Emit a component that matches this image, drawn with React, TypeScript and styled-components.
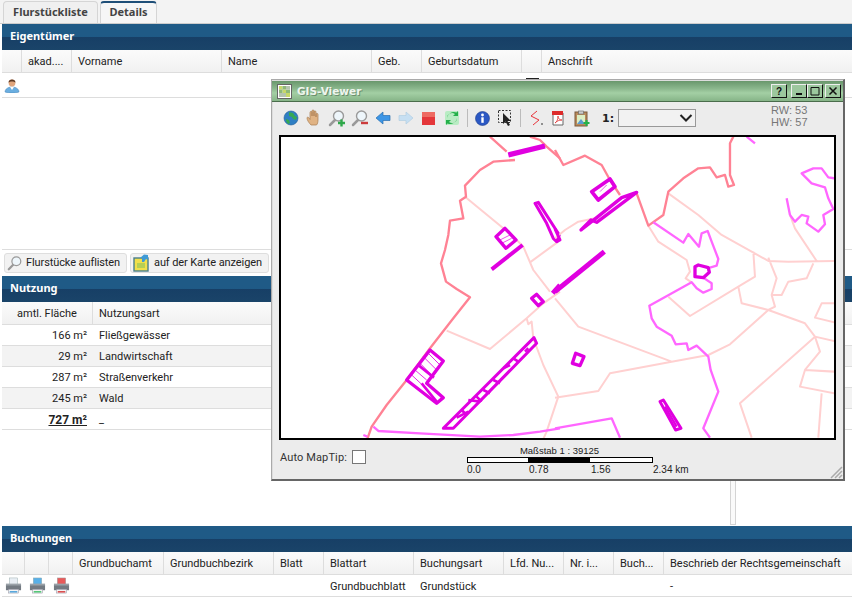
import styled, { createGlobalStyle } from "styled-components";

const Global = createGlobalStyle`
  html, body { margin: 0; padding: 0; background: #fff; }
  body { font-family: Roboto, "Noto Sans", sans-serif; font-size: 11px; color: #222; }
  #root { width: 852px; height: 604px; overflow: hidden; }
`;

const Page = styled.div`
  position: relative;
  width: 852px;
  height: 604px;
  overflow: hidden;
  background: #fff;
  display: flex;
  flex-direction: column;
`;

const TabBar = styled.div`
  display: flex;
  gap: 2px;
  height: 22px;
  padding: 1px 0 0 3px;
  background: #f3f3f3;
  border-bottom: 1px solid #ccc;
  box-sizing: content-box;
`;

const Tab = styled.div<{ $active?: boolean; $width: number }>`
  width: ${(p) => p.$width}px;
  box-sizing: border-box;
  border: 1px solid #d5d5d5;
  border-bottom: none;
  border-top: ${(p) => (p.$active ? "2px solid #1f4f78" : "1px solid #d5d5d5")};
  border-radius: 4px 4px 0 0;
  background: ${(p) => (p.$active ? "#f6f6f6" : "#f0f0f0")};
  font: 700 11px/${(p) => (p.$active ? 18 : 20)}px "Noto Sans", sans-serif;
  color: #444;
  text-align: center;
`;

const Section = styled.section`
  margin-left: 2px;
`;

const SectionTitle = styled.h2`
  margin: 0;
  height: 26px;
  padding-left: 8px;
  box-sizing: border-box;
  font: 700 11px/24px "Noto Sans", sans-serif;
  color: #fff;
  background: linear-gradient(#1f5a86 0%, #1f5a86 48%, #173f66 52%, #1a4469 100%);
`;

const HeadRow = styled.div`
  display: flex;
  height: 23px;
  background: linear-gradient(#fbfbfb, #f1f1f1);
  border-bottom: 1px solid #ddd;
  box-sizing: border-box;
`;

const HeadCell = styled.div<{ $w?: number; $center?: boolean }>`
  width: ${(p) => (p.$w ? `${p.$w}px` : "auto")};
  flex: ${(p) => (p.$w ? "none" : 1)};
  box-sizing: border-box;
  padding: 1px 6px 0;
  line-height: 22px;
  text-align: ${(p) => (p.$center ? "center" : "left")};
  white-space: nowrap;
  overflow: hidden;
  border-right: ${(p) => (p.$w ? "1px solid #ddd" : "none")};
`;

const Row = styled.div<{ $alt?: boolean; $h?: number }>`
  display: flex;
  align-items: center;
  height: ${(p) => p.$h || 21}px;
  box-sizing: border-box;
  background: ${(p) => (p.$alt ? "#f3f3f3" : "#fff")};
  border-bottom: 1px solid #ddd;
`;

const Cell = styled.div<{ $w?: number; $right?: boolean; $strong?: boolean }>`
  width: ${(p) => (p.$w ? `${p.$w}px` : "auto")};
  flex: ${(p) => (p.$w ? "none" : 1)};
  box-sizing: border-box;
  padding: 1px 6px 0;
  white-space: nowrap;
  text-align: ${(p) => (p.$right ? "right" : "left")};
  font-weight: ${(p) => (p.$strong ? 700 : 400)};
  font-size: ${(p) => (p.$strong ? "12px" : "11px")};
  text-decoration: ${(p) => (p.$strong ? "underline" : "none")};
`;

const IconCell = styled.div<{ $w: number }>`
  width: ${(p) => p.$w}px;
  flex: none;
  display: flex;
  justify-content: center;
`;

const EmptyArea = styled.div<{ $h: number }>`
  height: ${(p) => p.$h}px;
`;

const ButtonBar = styled.div`
  display: flex;
  gap: 3px;
  height: 27px;
  padding: 3px 0 0 2px;
  box-sizing: border-box;
  border-top: 1px solid #ddd;
`;

const ToolButton = styled.div<{ $w: number }>`
  width: ${(p) => p.$w}px;
  height: 20px;
  box-sizing: border-box;
  display: flex;
  align-items: center;
  gap: 3px;
  padding: 0 0 1px 2px;
  white-space: nowrap;
  letter-spacing: -0.1px;
  background: #f2f2f2;
  border: 1px solid #dedede;
  border-radius: 3px;
`;

const Strut = styled.div`
  position: absolute;
  left: 730px;
  top: 480px;
  width: 6px;
  height: 45px;
  box-sizing: border-box;
  border: 1px solid #d4d4d4;
  border-top: none;
  background: #fafafa;
`;

const Tick = styled.div`
  position: absolute;
  left: 526px;
  top: 78px;
  width: 13px;
  height: 1px;
  background: #222;
`;

const Window = styled.div`
  position: absolute;
  left: 271px;
  top: 79px;
  width: 574px;
  height: 402px;
  box-sizing: border-box;
  display: flex;
  flex-direction: column;
  background: #ececec;
  border: 1px solid #aaa;
  border-right: 2px solid #666;
  border-bottom: 2px solid #666;
  box-shadow: inset 1px 1px 0 #ddd;
`;

const TitleBar = styled.div`
  height: 20px;
  margin-top: 1px;
  flex: none;
  display: flex;
  align-items: center;
  padding: 0 2px 0 5px;
  background: linear-gradient(#69976c 0%, #8db98f 40%, #a3cfa4 60%, #86b488 100%);
  border-bottom: 1px solid #4a6d4c;
`;

const TitleText = styled.div`
  margin-left: 5px;
  font: 700 10.5px "DejaVu Sans", sans-serif;
  color: #eef5ee;
  text-shadow: 1px 1px 0 #6b8f6d;
  flex: 1;
`;

const TitleBtn = styled.div<{ $gap?: number }>`
  width: 16px;
  height: 14px;
  margin-left: ${(p) => p.$gap || 0}px;
  box-sizing: border-box;
  background: #9cc79e;
  border: 1px solid #111;
  border-top-color: #eee;
  border-left-color: #eee;
  display: flex;
  align-items: center;
  justify-content: center;
  font: 700 10px "Liberation Sans", sans-serif;
  color: #111;
`;

const Toolbar = styled.div`
  height: 33px;
  flex: none;
  display: flex;
  align-items: center;
  padding: 0 0 1px 7px;
  box-sizing: border-box;
`;

const ToolIcon = styled.div`
  width: 23px;
  height: 20px;
  flex: none;
  display: flex;
  align-items: center;
  justify-content: center;
`;

const ToolSep = styled.div<{ $tight?: boolean }>`
  width: 1px;
  height: 18px;
  margin: 0 3px 0 ${(p) => (p.$tight ? 3 : 4)}px;
  background: #bbb;
  flex: none;
`;

const ScaleLabel = styled.b`
  margin: 0 4px 0 9px;
  font: 700 11px "DejaVu Sans", sans-serif;
  color: #222;
`;

const SelectBox = styled.div`
  width: 78px;
  height: 18px;
  box-sizing: border-box;
  border: 1px solid #999;
  background: #f2f2f2;
  display: flex;
  justify-content: flex-end;
  align-items: center;
  padding-right: 2px;
`;

const Coords = styled.div`
  margin-left: 75px;
  font: 11px/12px "Liberation Sans", sans-serif;
  color: #777;
  margin-top: -4px;
`;

const MapFrame = styled.div`
  margin-left: 7px;
  width: 557px;
  height: 305px;
  flex: none;
  box-sizing: border-box;
  border: 2px solid #000;
  background: #fff;
  overflow: hidden;
  svg { display: block; }
`;

const Footer = styled.div`
  flex: 1;
  position: relative;
  display: flex;
  padding-left: 8px;
`;

const TipLabel = styled.div`
  display: flex;
  align-items: center;
  gap: 5px;
  height: 34px;
  width: 87px;
  white-space: nowrap;
  font-size: 11px;
  color: #333;
  letter-spacing: 0.12px;
`;

const TipBox = styled.div`
  width: 14px;
  height: 14px;
  flex: none;
  box-sizing: border-box;
  border: 1px solid #777;
  background: #fff;
`;

const ScaleWrap = styled.div`
  margin-left: 100px;
  padding-top: 5px;
  width: 240px;
  font: 9.5px/11px "Liberation Sans", sans-serif;
  color: #222;
`;

const ScaleTitle = styled.div`
  width: 185px;
  text-align: center;
`;

const ScaleBar = styled.div`
  display: flex;
  width: 186px;
  height: 6px;
  margin-top: 1px;
  box-sizing: border-box;
  border: 1px solid #000;
  background: #fff;
`;

const ScaleFill = styled.div`
  width: 62px;
  margin-left: 60px;
  background: #000;
`;

const ScaleTicks = styled.div`
  display: flex;
  margin-top: 1px;
  span { flex: none; width: 62px; font-size: 10px; white-space: nowrap; }
`;

const Grip = styled.svg`
  position: absolute;
  right: 0;
  bottom: 0;
`;

const Person = () => (
  <svg width="16" height="16" viewBox="0 0 16 16">
    <path d="M1 15c0-3 3-5 7-5s7 2 7 5c-3 1.300-11 1.300-14 0z" fill="#6aaee0" stroke="#4a86b8" strokeWidth=".5" />
    <path d="M6 10l2 3 2-3z" fill="#fff" />
    <circle cx="8" cy="6" r="3.400" fill="#e0a57c" />
    <path d="M4.500 5.500C4.500 1.500 11.500 1.500 11.500 5.500 10 4 6 4 4.500 5.500z" fill="#5c3a26" />
  </svg>
);

const Magnifier = ({ sign, size = 18 }: { sign?: "+" | "-"; size?: number }) => (
  <svg width={size} height={size} viewBox="0 0 18 18">
    <path d="M7.500 10.500L2 16" stroke="#999" strokeWidth="2.500" strokeLinecap="round" />
    <circle cx="10.500" cy="7" r="5" fill="#eef6fb" stroke="#9a9a9a" strokeWidth="1.400" />
    {sign === "+" && <path d="M13.500 10.500v7M10 14h7" stroke="#2fa84a" strokeWidth="2.400" />}
    {sign === "-" && <path d="M10 14h7" stroke="#cc3b3b" strokeWidth="2.400" />}
  </svg>
);

const MapTile = () => (
  <svg width="15" height="15" viewBox="0 0 15 15">
    <rect x=".5" y=".5" width="14" height="14" fill="#fff" stroke="#666" />
    <path d="M2 2h3.500v3.500H2zM5.500 5.500H9V9H5.500zM9 9h4v4H9z" fill="#c7d86a" />
    <path d="M5.500 2H9v3.500H5.500zM2 5.500h3.500V9H2zM9 5.500h4V9H9z" fill="#8fb87a" />
    <path d="M9 2h4v3.500H9zM2 9h3.500v4H2zM5.500 9H9v4H5.500z" fill="#b5c4b0" />
  </svg>
);

const KarteIcon = () => (
  <svg width="18" height="18" viewBox="0 0 18 18">
    <rect x="1" y="4" width="14" height="13" fill="#f1e04a" stroke="#4b7f8a" strokeWidth="1.400" />
    <rect x="4" y="9" width="8" height="5" fill="#b6cf54" />
    <path d="M9 8V4h-2l4-3.500L15 1v5l-2-1-2 3z" fill="#3f9ad6" />
  </svg>
);

const Printer = ({ top, tray }: { top: string; tray: string }) => (
  <svg width="17" height="17" viewBox="0 0 18 18">
    <rect x="4.500" y="1" width="9" height="7" fill={top} stroke="#9aa" strokeWidth=".5" />
    <path d="M1 8h16v6H1z" fill="#737a82" />
    <rect x="1" y="7" width="16" height="2" fill="#9aa1a8" />
    <rect x="3.500" y="13" width="11" height="4" fill="#f4f4f4" stroke="#889" strokeWidth=".5" />
    <rect x="5" y="15" width="8" height="1.400" fill={tray} />
  </svg>
);

const Globe = () => (
  <svg width="16" height="16" viewBox="0 0 16 16">
    <circle cx="8" cy="8" r="7" fill="#2f7fc4" stroke="#1f5d96" strokeWidth=".6" />
    <path d="M6 2l4 1 2 3 2 1-1 3-3-1-1-2-3-1zM3 9l3 1 1 3-2 1-2-3z" fill="#35a853" />
  </svg>
);

const HandIcon = () => (
  <svg width="16" height="18" viewBox="0 0 16 18">
    <path
      d="M5 16c-2-2-4-5-4-7 0-1.300 1.500-1 2 0l1 1.500V3.500c0-1.500 2-1.500 2 0V7V2c0-1.500 2-1.500 2 0v5V3c0-1.500 2-1.500 2 0v5-2.500c0-1.500 2-1.500 2 0V11c0 2-.500 4-1.500 5z"
      fill="#e0b384"
      stroke="#a87c50"
      strokeWidth=".7"
    />
  </svg>
);

const Arrow = ({ fill, stroke, flip }: { fill: string; stroke: string; flip?: boolean }) => (
  <svg width="16" height="14" viewBox="0 0 16 14" style={flip ? { transform: "scaleX(-1)" } : undefined}>
    <path d="M1 7l7-6v3.500h7v5H8V13z" fill={fill} stroke={stroke} strokeWidth=".7" />
  </svg>
);

const StopIcon = () => (
  <svg width="13" height="13" viewBox="0 0 13 13">
    <rect width="13" height="13" fill="#e4373a" />
    <rect width="13" height="5" fill="#ee6a62" />
  </svg>
);

const Refresh = () => (
  <svg width="16" height="16" viewBox="0 0 16 16">
    <rect x="1" y="1" width="14" height="14" rx="2" fill="#b9ecc4" />
    <path d="M3 8a5 5 0 0 1 8-4l-2 2h5V1l-1.500 1.500A7 7 0 0 0 3 8z" fill="#24b04a" />
    <path d="M13 8a5 5 0 0 1-8 4l2-2H2v5l1.500-1.500A7 7 0 0 0 13 8z" fill="#24b04a" />
  </svg>
);

const InfoIcon = () => (
  <svg width="15" height="15" viewBox="0 0 15 15">
    <circle cx="7.500" cy="7.500" r="7" fill="#2b58c4" stroke="#1c3d8c" strokeWidth=".6" />
    <rect x="6.300" y="6.300" width="2.400" height="5.500" fill="#fff" />
    <circle cx="7.500" cy="4" r="1.400" fill="#fff" />
  </svg>
);

const SelectIcon = () => (
  <svg width="16" height="16" viewBox="0 0 16 16">
    <rect x=".5" y=".5" width="12" height="12" fill="none" stroke="#333" strokeDasharray="2 1.500" />
    <path d="M5 3v11l2.500-2.500L10 16l2-1-2.500-4H13z" fill="#222" />
  </svg>
);

const LineTool = () => (
  <svg width="16" height="16" viewBox="0 0 16 16">
    <path d="M9 1L3 6l8 4-6 5" fill="none" stroke="#e8333a" strokeWidth="1" />
    <rect x="13" y="13.500" width="2" height="1" fill="#333" />
  </svg>
);

const PdfTool = () => (
  <svg width="16" height="16" viewBox="0 0 16 16">
    <path d="M2 3h10v12H2z" fill="#fff" stroke="#666" />
    <rect x="1" y="1" width="11" height="4" fill="#dd2b2b" />
    <path d="M4 13c2-1 3-4 3-7 0 3 2 4 4 4-3 0-5 1-7 3z" fill="none" stroke="#d33" strokeWidth=".8" />
  </svg>
);

const ClipTool = () => (
  <svg width="16" height="17" viewBox="0 0 16 17">
    <rect x="1" y="2" width="12" height="14" fill="#b98a5c" stroke="#7a5a3a" />
    <rect x="4.500" y="1" width="5" height="3" fill="#ccc" stroke="#666" strokeWidth=".6" />
    <rect x="3" y="5" width="8" height="9" fill="#dcefc4" />
    <path d="M3 14l4-5 4 5z" fill="#5a9ad0" />
    <path d="M12.500 10v6M9.500 13h6" stroke="#22b24a" strokeWidth="2" />
  </svg>
);

const strong = "M630 5L680 50M705 75L640 80 600 105 555 152 558 185 540 197 550 250 510 257 505 300 495 345 483 385 498 440 530 462 570 487 520 550 450 640 380 735 320 810 275 875 262 912M750 5L780 15 800 35 840 70";
const light = "M555 185L670 280 710 315 730 335 760 405 810 470M750 382L835 320M500 587L630 642 740 550 790 505 840 470M740 550L745 568 755 560 760 610 790 690 835 785 800 890 790 912";
const violet = "M250 900L262 905M280 875L295 888 420 895 600 905 700 900 780 890 840 880";

const strong2 = "M0 45L25 90 90 62 140 90 165 135 195 180M245 175L280 272 325 240 340 170 385 130 430 100 465 97 485 127 510 120 520 155 537 150 525 120 525 25 535 5";
const violet2 = "M575 5L600 25M295 262L385 323 400 297 432 335 440 295 458 288 470 320 490 372 485 392 465 398M440 425L470 445 470 462 445 473 425 460 410 442 283 512 290 550 305 575 350 602 362 628 395 625 400 645 425 632 460 665 467 705 490 770 445 880 465 908M0 880L170 850 195 908M838 130L820 127 800 100 775 100 740 115 770 145 810 157 820 190 835 222 805 240 810 268 790 290 755 265 760 245 740 240 720 260 705 240M695 190L705 240";
const light2 = "M340 175L430 240 500 300 590 350 640 378 700 380 838 378M640 368L665 430 650 480 680 480 700 440 755 430 775 385M595 350L600 425 550 455 405 543 340 485M550 455L560 505 640 525 750 565 780 605 838 618M640 525L660 515 650 480M640 525L525 628 460 660 350 680 165 715 130 768 0 788M0 490L70 575 350 680M780 605L555 805 590 908M780 605L795 650 750 705 735 755 838 775M750 705L838 710M800 775L790 908M280 272L310 320 395 375 405 410 392 430 410 442M838 505L800 505 780 548 838 562M705 240L720 280 785 378M0 310L30 285 70 260 120 250";

const MapDrawing = () => (
  <svg width="553" height="301" viewBox="281 137 553 301">
    <g fill="none" strokeLinejoin="round" transform="translate(280 135) scale(.3333)">
      <path d={light} stroke="#ffd0d0" strokeWidth="6" />
      <path d={strong} stroke="#ff8294" strokeWidth="7" />
      <path d={violet} stroke="#ff66ff" strokeWidth="7" />
      <g stroke="#e000e0">
        <path d="M685 60L795 33" strokeWidth="16" />
        <path d="M648 305L675 280 708 315 678 340Z" strokeWidth="10" />
        <path d="M660 315L690 300M665 325L695 310" strokeWidth="2" />
        <path d="M635 403L728 330" strokeWidth="12" />
        <path d="M765 205L775 202 838 300 830 320 820 310 800 265Z" strokeWidth="9" />
        <path d="M755 490L770 478 790 500 775 512Z" strokeWidth="10" />
        <path d="M840 450L818 475" strokeWidth="14" />
        <path d="M380 735L450 645 490 678 440 745 490 788 470 805Z" strokeWidth="10" />
        <path d="M417 692L462 728M425 745L470 800" strokeWidth="8" />
        <path d="M405 705L440 735M395 720L425 748M430 665L470 705M445 655L480 690M420 685L455 720" strokeWidth="2.500" />
        <path d="M490 880L762 608 770 625 520 880Z" strokeWidth="9" />
        <path d="M530 848L565 830M565 795L600 800M670 700L690 690M735 650L745 640M610 765L630 775M640 735L660 745M700 670L715 680M545 825L560 840M590 785L605 800" strokeWidth="8" />
      </g>
    </g>
    <g fill="none" strokeLinejoin="round" transform="translate(555 135) scale(.3333)">
      <path d={light2} stroke="#ffd0d0" strokeWidth="6" />
      <path d={strong2} stroke="#ff8294" strokeWidth="7" />
      <path d={violet2} stroke="#ff66ff" strokeWidth="7" />
      <g stroke="#e000e0">
        <path d="M78 285L108 255 125 262 245 172 200 188 125 248Z" strokeWidth="10" />
        <path d="M110 170L165 132 180 155 130 195Z" strokeWidth="11" />
        <path d="M135 170L155 150" strokeWidth="2" />
        <path d="M0 470L148 350" strokeWidth="15" />
        <path d="M420 395L430 390 460 398 463 412 445 428 420 425Z" strokeWidth="10" />
        <path d="M52 685L62 655 87 665 75 692Z" strokeWidth="10" />
        <path d="M315 800L325 795 378 880 362 885Z" strokeWidth="9" />
        <path d="M330 815L365 875" strokeWidth="7" />
        <path d="M0 282L15 315 5 320" strokeWidth="9" />
      </g>
    </g>
  </svg>
);

const eigenCols = [
  ["", 20],
  ["akad....", 50],
  ["Vorname", 150],
  ["Name", 150],
  ["Geb.", 50],
  ["Geburtsdatum", 100],
  ["", 20],
] as const;

const buchungCols = [
  ["", 23],
  ["", 24],
  ["", 24],
  ["Grundbuchamt", 91],
  ["Grundbuchbezirk", 110],
  ["Blatt", 50],
  ["Blattart", 90],
  ["Buchungsart", 90],
  ["Lfd. Nu...", 60],
  ["Nr. i...", 50],
  ["Buch...", 50],
] as const;

const nutzung = [
  { area: "166 m²", kind: "Fließgewässer" },
  { area: "29 m²", kind: "Landwirtschaft", alt: true },
  { area: "287 m²", kind: "Straßenverkehr" },
  { area: "245 m²", kind: "Wald", alt: true },
];

export default function App() {
  return (
    <Page>
      <Global />
      <TabBar>
        <Tab $width={95}>Flurstückliste</Tab>
        <Tab $width={57} $active>Details</Tab>
      </TabBar>

      <Section>
        <SectionTitle>Eigentümer</SectionTitle>
        <HeadRow>
          {eigenCols.map(([label, w], i) => (
            <HeadCell key={i} $w={w}>{label}</HeadCell>
          ))}
          <HeadCell>Anschrift</HeadCell>
        </HeadRow>
        <Row $h={25}>
          <IconCell $w={20}><Person /></IconCell>
        </Row>
        <EmptyArea $h={151} />
      </Section>

      <Section>
        <ButtonBar>
          <ToolButton $w={123}><Magnifier size={16} />Flurstücke auflisten</ToolButton>
          <ToolButton $w={139}><KarteIcon />auf der Karte anzeigen</ToolButton>
        </ButtonBar>
        <SectionTitle>Nutzung</SectionTitle>
        <HeadRow>
          <HeadCell $w={91} $center>amtl. Fläche</HeadCell>
          <HeadCell>Nutzungsart</HeadCell>
        </HeadRow>
        {nutzung.map((n) => (
          <Row key={n.kind} $alt={n.alt}>
            <Cell $w={91} $right>{n.area}</Cell>
            <Cell>{n.kind}</Cell>
          </Row>
        ))}
        <Row>
          <Cell $w={91} $right $strong>727 m²</Cell>
          <Cell>_</Cell>
        </Row>
        <EmptyArea $h={96} />
      </Section>

      <Section>
        <SectionTitle>Buchungen</SectionTitle>
        <HeadRow>
          {buchungCols.map(([label, w], i) => (
            <HeadCell key={i} $w={w}>{label}</HeadCell>
          ))}
          <HeadCell>Beschrieb der Rechtsgemeinschaft</HeadCell>
        </HeadRow>
        <Row $h={22}>
          <IconCell $w={23}><Printer top="#e8eef4" tray="#3a9ad9" /></IconCell>
          <IconCell $w={24}><Printer top="#58b0e8" tray="#38c060" /></IconCell>
          <IconCell $w={24}><Printer top="#e85a5a" tray="#d83030" /></IconCell>
          <Cell $w={91} />
          <Cell $w={110} />
          <Cell $w={50} />
          <Cell $w={90}>Grundbuchblatt</Cell>
          <Cell $w={90}>Grundstück</Cell>
          <Cell $w={60} />
          <Cell $w={50} />
          <Cell $w={50} />
          <Cell>-</Cell>
        </Row>
      </Section>

      <Tick />
      <Strut />

      <Window>
        <TitleBar>
          <MapTile />
          <TitleText>GIS-Viewer</TitleText>
          <TitleBtn>?</TitleBtn>
          <TitleBtn $gap={4}>
            <svg width="10" height="10" viewBox="0 0 10 10"><rect x="2" y="7" width="6" height="2" fill="#111" /></svg>
          </TitleBtn>
          <TitleBtn>
            <svg width="10" height="10" viewBox="0 0 10 10"><path d="M1 1.500h8v7.500H1z" fill="none" stroke="#111" /></svg>
          </TitleBtn>
          <TitleBtn $gap={2}>
            <svg width="10" height="10" viewBox="0 0 10 10"><path d="M1.500 1.500l7 7M8.500 1.500l-7 7" stroke="#111" strokeWidth="1.500" /></svg>
          </TitleBtn>
        </TitleBar>

        <Toolbar>
          <ToolIcon><Globe /></ToolIcon>
          <ToolIcon><HandIcon /></ToolIcon>
          <ToolIcon><Magnifier sign="+" /></ToolIcon>
          <ToolIcon><Magnifier sign="-" /></ToolIcon>
          <ToolIcon><Arrow fill="#3d96e6" stroke="#2a70b0" /></ToolIcon>
          <ToolIcon><Arrow fill="#c6dff2" stroke="#b2cfe2" flip /></ToolIcon>
          <ToolIcon><StopIcon /></ToolIcon>
          <ToolIcon><Refresh /></ToolIcon>
          <ToolSep />
          <ToolIcon><InfoIcon /></ToolIcon>
          <ToolIcon><SelectIcon /></ToolIcon>
          <ToolSep $tight />
          <ToolIcon><LineTool /></ToolIcon>
          <ToolIcon><PdfTool /></ToolIcon>
          <ToolIcon><ClipTool /></ToolIcon>
          <ScaleLabel>1:</ScaleLabel>
          <SelectBox>
            <svg width="14" height="10" viewBox="0 0 14 10"><path d="M1.500 2l5.500 5.500L12.500 2" fill="none" stroke="#222" strokeWidth="2" /></svg>
          </SelectBox>
          <Coords>
            <div>RW: 53</div>
            <div>HW: 57</div>
          </Coords>
        </Toolbar>

        <MapFrame>
          <MapDrawing />
        </MapFrame>

        <Footer>
          <TipLabel>Auto MapTip:<TipBox /></TipLabel>
          <ScaleWrap>
            <ScaleTitle>Maßstab 1 : 39125</ScaleTitle>
            <ScaleBar><ScaleFill /></ScaleBar>
            <ScaleTicks>
              <span>0.0</span>
              <span>0.78</span>
              <span>1.56</span>
              <span>2.34 km</span>
            </ScaleTicks>
          </ScaleWrap>
          <Grip width="14" height="14" viewBox="0 0 14 14">
            <path d="M13 2L2 13M13 6L6 13M13 10L10 13" stroke="#aaa" strokeWidth="1.500" />
          </Grip>
        </Footer>
      </Window>
    </Page>
  );
}
